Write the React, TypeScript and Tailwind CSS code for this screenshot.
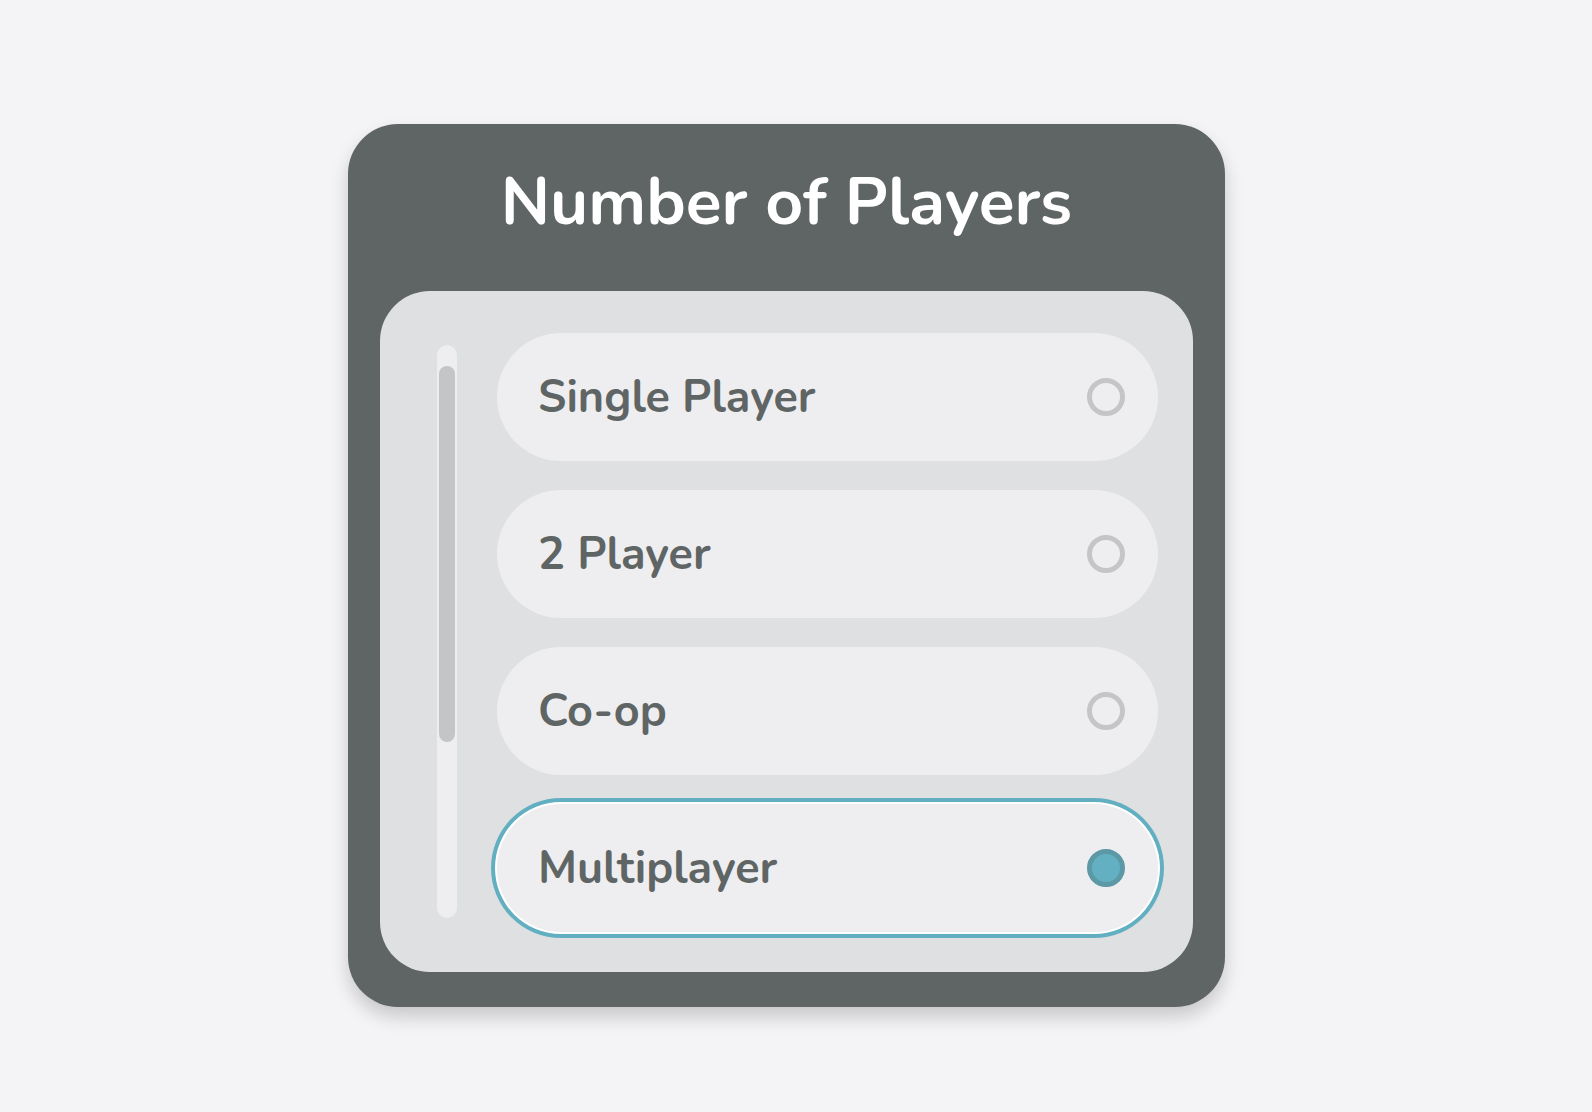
import React from "react";

const items = [
  { label: "Single Player", selected: false },
  { label: "2 Player", selected: false },
  { label: "Co-op", selected: false },
  { label: "Multiplayer", selected: true },
];

export default function App() {
  return (
    <div
      className="min-h-[1112px] w-full bg-[#f4f4f6] pl-[348px] pt-[124px]"
      style={{ fontFamily: "Nunito, Lato, 'Noto Sans', sans-serif" }}
    >
      <div className="flex h-[883px] w-[877px] flex-col rounded-[50px] bg-[#5f6565] pb-[35px] shadow-[0_10px_18px_rgba(0,0,0,0.18)]">
        <div className="flex h-[167px] shrink-0 justify-center pt-[45px]">
          <h1 className="text-[66px] font-bold leading-none text-white">Number of Players</h1>
        </div>
        <div className="mx-[32px] flex h-[681px] rounded-[50px] bg-[#dfe0e2] pl-[57px] pr-[35px]">
          <div className="mt-[54px] flex h-[573px] w-[20px] shrink-0 justify-center rounded-full bg-[#eeeef0]">
            <div className="mt-[21px] h-[376px] w-[16px] rounded-full bg-[#c4c5c6]" />
          </div>
          <div className="ml-[40px] flex flex-1 flex-col gap-[29px] pt-[42px]">
            {items.map((it) => (
              <div
                key={it.label}
                className={
                  it.selected
                    ? "flex h-[128px] items-center justify-between rounded-full bg-[#eeeef0] pl-[41px] pr-[33px] shadow-[0_0_0_2px_#ffffff,0_0_0_6px_#62afc1]"
                    : "flex h-[128px] items-center justify-between rounded-full bg-[#eeeef0] pl-[41px] pr-[33px]"
                }
              >
                <span className="text-[45px] font-bold leading-none text-[#5f6565]">{it.label}</span>
                <span
                  className={
                    it.selected
                      ? "h-[38px] w-[38px] rounded-full border-[5px] border-[#5c98a5] bg-[#63b0c2]"
                      : "h-[38px] w-[38px] rounded-full border-[5px] border-[#c5c5c7]"
                  }
                />
              </div>
            ))}
          </div>
        </div>
      </div>
    </div>
  );
}
